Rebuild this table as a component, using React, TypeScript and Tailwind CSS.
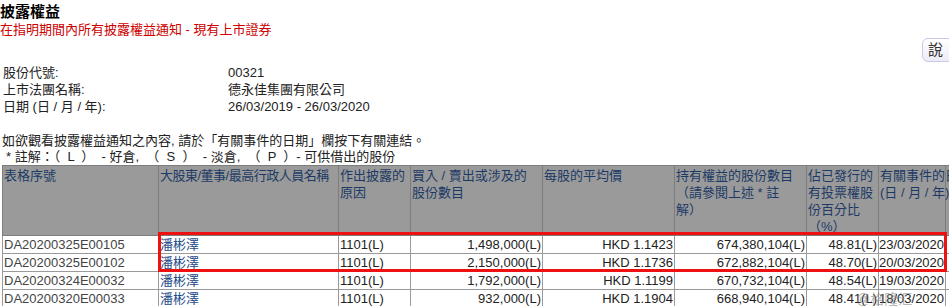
const rows = [
  ["DA20200325E00105", "潘彬澤", "1101(L)", "1,498,000(L)", "HKD 1.1423", "674,380,104(L)", "48.81(L)", "23/03/2020"],
  ["DA20200325E00102", "潘彬澤", "1101(L)", "2,150,000(L)", "HKD 1.1736", "672,882,104(L)", "48.70(L)", "20/03/2020"],
  ["DA20200324E00032", "潘彬澤", "1101(L)", "1,792,000(L)", "HKD 1.1199", "670,732,104(L)", "48.54(L)", "19/03/2020"],
  ["DA20200320E00033", "潘彬澤", "1101(L)", "932,000(L)", "HKD 1.1904", "668,940,104(L)", "48.41(L)", "18/03/2020"],
];

const widths = ["w-[156px]", "w-[180px]", "w-[72px]", "w-[132px]", "w-[132px]", "w-[132px]", "w-[72px]", "w-[67px]", "w-[120px]"];

const Info = ({ label, value }) => (
  <div className="flex h-[17px] leading-[17px]">
    <span className="w-[228px] pl-[3px]">{label}</span>
    <span>{value}</span>
  </div>
);

const Th = ({ children, className = "" }) => (
  <th className={`border border-[#7d7d7d] bg-[#9a9a9a] px-[1px] pt-[1px] text-left align-top font-normal text-[#1d3a66] ${className}`}>
    {children}
  </th>
);

export default function App() {
  return (
    <div
      className="relative h-[306px] w-[949px] overflow-hidden bg-white text-[13px] text-[#222]"
      style={{ fontFamily: '"Liberation Sans", "Noto Sans CJK TC", sans-serif' }}
    >
      <div className="pt-[3px] text-[15px] font-bold leading-[18px] text-black">披露權益</div>
      <div className="h-[17px] leading-[17px] text-[#cc0000]">在指明期間內所有披露權益通知 - 現有上市證券</div>

      <div className="flex h-[26px] justify-end">
        <button className="-mr-[14px] h-[24px] w-[41px] rounded-md border border-[#c9c9ea] bg-gradient-to-b from-white to-[#ececf6] pr-[14px] text-[15px] text-[#333]">
          說
        </button>
      </div>

      <Info label="股份代號:" value="00321" />
      <Info label="上市法團名稱:" value="德永佳集團有限公司" />
      <Info label="日期 (日 / 月 / 年):" value="26/03/2019 - 26/03/2020" />

      <div className="mt-[17px] h-[17px] pl-[2px] leading-[17px]">
        如欲觀看披露權益通知之內容, 請於「有關事件的日期」欄按下有關連結。
      </div>
      <div className="h-[16px] whitespace-pre pl-[6px] leading-[16px]">
        {"* 註解：（  L  ）  - 好倉,  （  S  ）  - 淡倉,  （  P  ）- 可供借出的股份"}
      </div>

      <div className="relative ml-[2px]">
        <table className="w-[1063px] table-fixed border-collapse leading-[17px]">
          <colgroup>
            {widths.map((w, i) => (
              <col key={i} className={w} />
            ))}
          </colgroup>
          <thead>
            <tr className="h-[69px]">
              <Th>表格序號</Th>
              <Th className="whitespace-nowrap tracking-[-0.5px]">大股東/董事/最高行政人員名稱</Th>
              <Th>作出披露的<br />原因</Th>
              <Th>買入 / 賣出或涉及的<br />股份數目</Th>
              <Th>每股的平均價</Th>
              <Th>持有權益的股份數目<br />（請參閱上述 * 註<br />解）</Th>
              <Th>佔已發行的<br />有投票權股<br />份百分比<br />（%）</Th>
              <Th className="whitespace-nowrap">有關事件的日期<br />(日 / 月 / 年)</Th>
              <Th></Th>
            </tr>
          </thead>
          <tbody>
            {rows.map((r) => (
              <tr key={r[0]} className="h-[18px]">
                <td className="border border-[#9a9a9a] px-[1px] text-[#444]">{r[0]}</td>
                <td className="border border-[#9a9a9a] px-[1px] text-[#1f4c88]">{r[1]}</td>
                <td className="border border-[#9a9a9a] px-[1px]">{r[2]}</td>
                <td className="border border-[#9a9a9a] px-[1px] text-right">{r[3]}</td>
                <td className="border border-[#9a9a9a] px-[1px] text-right">{r[4]}</td>
                <td className="border border-[#9a9a9a] px-[1px] text-right">{r[5]}</td>
                <td className="border border-[#9a9a9a] px-[1px] text-right">{r[6]}</td>
                <td className="whitespace-nowrap border border-[#9a9a9a] px-0">{r[7]}</td>
                <td className="border border-[#9a9a9a]"></td>
              </tr>
            ))}
          </tbody>
        </table>
        <div className="pointer-events-none absolute left-[156px] top-[67px] h-[40px] w-[789px] border-[3px] border-[#ee1111]" />
      </div>

      <div className="pointer-events-none absolute left-[856px] top-[289px] text-[14px] text-[#888] opacity-60">@格隆汇</div>
    </div>
  );
}
